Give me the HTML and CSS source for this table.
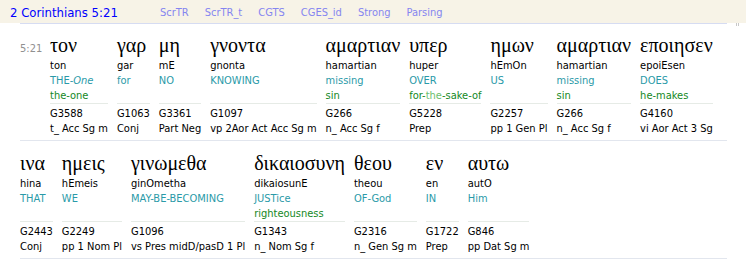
FILE: index.html
```html
<!DOCTYPE html>
<html>
<head>
<meta charset="utf-8">
<link rel="stylesheet" href="styles.css">
</head>
<body>
<div class="header">
  <span class="ref">2 Corinthians 5:21</span>
  <nav class="tabs">
    <span>ScrTR</span><span>ScrTR_t</span><span>CGTS</span><span>CGES_id</span><span>Strong</span><span>Parsing</span>
  </nav>
  <span class="grip"></span>
</div>
<div class="verse">
  <div class="row">
    <div class="vnum">5:21</div>
    <div class="word"><div class="gk">τον</div><div class="tr">ton</div><div class="gl"><div class="en">THE-<i>One</i></div><div class="alt">the-one</div></div><div class="st">G3588</div><div class="ps">t_ Acc Sg m</div></div>
    <div class="word"><div class="gk">γαρ</div><div class="tr">gar</div><div class="gl"><div class="en">for</div></div><div class="st">G1063</div><div class="ps">Conj</div></div>
    <div class="word"><div class="gk">μη</div><div class="tr">mE</div><div class="gl"><div class="en">NO</div></div><div class="st">G3361</div><div class="ps">Part Neg</div></div>
    <div class="word"><div class="gk">γνοντα</div><div class="tr">gnonta</div><div class="gl"><div class="en">KNOWING</div></div><div class="st">G1097</div><div class="ps">vp 2Aor Act Acc Sg m</div></div>
    <div class="word"><div class="gk">αμαρτιαν</div><div class="tr">hamartian</div><div class="gl"><div class="en">missing</div><div class="alt">sin</div></div><div class="st">G266</div><div class="ps">n_ Acc Sg f</div></div>
    <div class="word"><div class="gk">υπερ</div><div class="tr">huper</div><div class="gl"><div class="en">OVER</div><div class="alt">for-<span class="lt">the</span>-sake-of</div></div><div class="st">G5228</div><div class="ps">Prep</div></div>
    <div class="word"><div class="gk">ημων</div><div class="tr">hEmOn</div><div class="gl"><div class="en">US</div></div><div class="st">G2257</div><div class="ps">pp 1 Gen Pl</div></div>
    <div class="word"><div class="gk">αμαρτιαν</div><div class="tr">hamartian</div><div class="gl"><div class="en">missing</div><div class="alt">sin</div></div><div class="st">G266</div><div class="ps">n_ Acc Sg f</div></div>
    <div class="word"><div class="gk">εποιησεν</div><div class="tr">epoiEsen</div><div class="gl"><div class="en">DOES</div><div class="alt">he-makes</div></div><div class="st">G4160</div><div class="ps">vi Aor Act 3 Sg</div></div>
  </div>
  <div class="row">
    <div class="word"><div class="gk">ινα</div><div class="tr">hina</div><div class="gl"><div class="en">THAT</div></div><div class="st">G2443</div><div class="ps">Conj</div></div>
    <div class="word"><div class="gk">ημεις</div><div class="tr">hEmeis</div><div class="gl"><div class="en">WE</div></div><div class="st">G2249</div><div class="ps">pp 1 Nom Pl</div></div>
    <div class="word"><div class="gk">γινωμεθα</div><div class="tr">ginOmetha</div><div class="gl"><div class="en">MAY-BE-BECOMING</div></div><div class="st">G1096</div><div class="ps">vs Pres midD/pasD 1 Pl</div></div>
    <div class="word"><div class="gk">δικαιοσυνη</div><div class="tr">dikaiosunE</div><div class="gl"><div class="en">JUSTice</div><div class="alt">righteousness</div></div><div class="st">G1343</div><div class="ps">n_ Nom Sg f</div></div>
    <div class="word"><div class="gk">θεου</div><div class="tr">theou</div><div class="gl"><div class="en">OF-God</div></div><div class="st">G2316</div><div class="ps">n_ Gen Sg m</div></div>
    <div class="word"><div class="gk">εν</div><div class="tr">en</div><div class="gl"><div class="en">IN</div></div><div class="st">G1722</div><div class="ps">Prep</div></div>
    <div class="word"><div class="gk">αυτω</div><div class="tr">autO</div><div class="gl"><div class="en">Him</div></div><div class="st">G846</div><div class="ps">pp Dat Sg m</div></div>
  </div>
</div>
</body>
</html>
```
FILE: styles.css
```css
html, body {
  margin: 0;
  padding: 0;
  background: #ffffff;
}
body {
  font-family: "DejaVu Sans Condensed", "Liberation Sans", Arial, sans-serif;
  font-size: 11px;
  color: #000;
}
.header {
  height: 23px;
  background: #f7f3e7;
  display: flex;
  align-items: flex-end;
  padding-left: 10px;
  position: relative;
}
.ref {
  font-size: 13px;
  line-height: 20px;
  color: #0000ff;
  width: 150px;
}
.tabs {
  display: flex;
  gap: 16px;
  color: #8585f0;
  font-size: 11px;
  line-height: 20px;
}
.grip {
  position: absolute;
  right: 7px;
  top: 23px;
  width: 3px;
  height: 3px;
  border-left: 1px solid #c8c8c8;
  border-right: 1px solid #c8c8c8;
  box-sizing: border-box;
}
.verse {
  margin: 0 19px 0 20px;
  border-top: 1px solid #d6dcf2;
  padding-top: 10px;
}
.row {
  display: flex;
  gap: 9px;
  border-bottom: 1px solid #e2e6ee;
  padding-bottom: 4px;
  margin-bottom: 11px;
}
.vnum {
  color: #909090;
  width: 21px;
  padding-top: 7px;
  line-height: 15px;
}
.word {
  display: flex;
  flex-direction: column;
  line-height: 15px;
  white-space: nowrap;
}
.gk {
  font-family: "Liberation Serif", "Times New Roman", serif;
  font-size: 20px;
  line-height: 22px;
  padding-bottom: 2px;
}
.gl {
  flex: 1;
  border-bottom: 1px solid #e6ebe6;
}
.en {
  color: #2a9aa8;
}
.alt {
  color: #14881e;
}
.lt {
  color: #6cc06c;
}
.st {
  padding-top: 2px;
}
```
